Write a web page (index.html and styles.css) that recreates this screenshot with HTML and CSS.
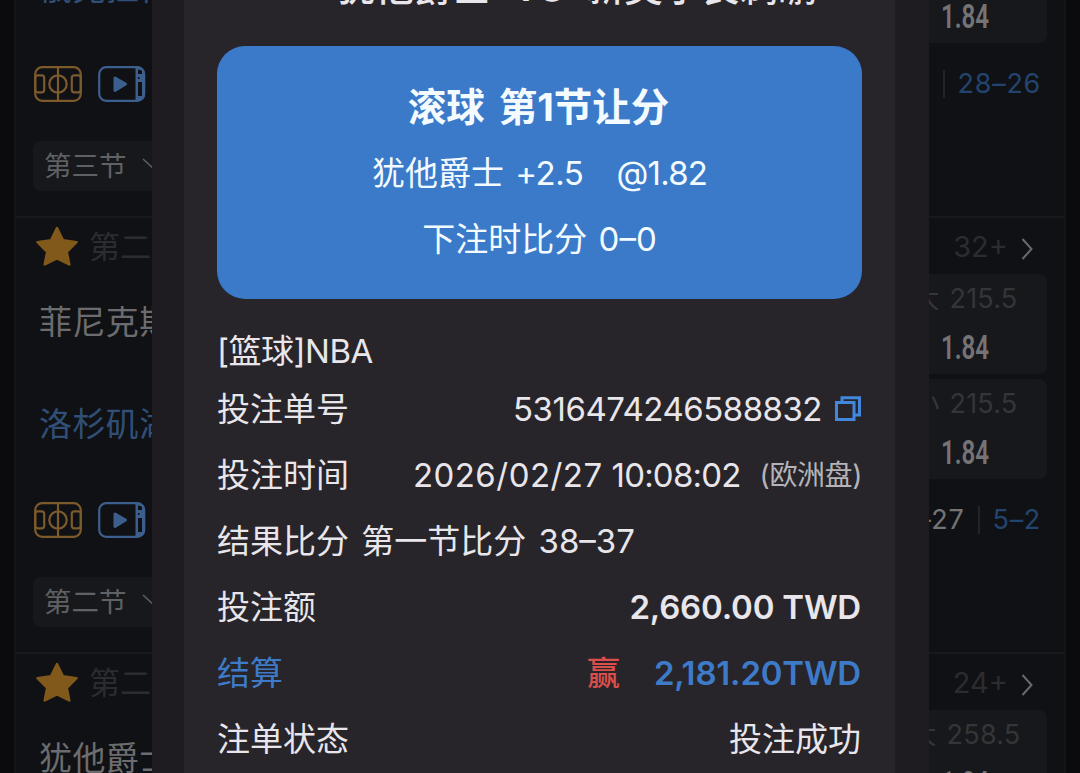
FILE: index.html
```
<!DOCTYPE html>
<html lang="zh-CN">
<head>
    <meta charset="UTF-8">
    <meta name="viewport" content="width=device-width, initial-scale=1.0">
    <title>注单详情</title>
    <link rel="stylesheet" href="styles.css">
</head>
<body>
    <!-- Shared icons -->
    <svg class="sprite" width="0" height="0">
        <symbol id="court" viewBox="0 0 48 36">
            <g fill="none" stroke="currentColor" stroke-width="2.200">
                <rect x="1.200" y="1.200" width="45.600" height="33.600" rx="7"/>
                <path d="M24 1v34"/>
                <rect x="1.200" y="9.300" width="9" height="17" rx="2.500"/>
                <rect x="37.800" y="9.300" width="9" height="17" rx="2.500"/>
                <circle cx="24" cy="18" r="8.700"/>
            </g>
        </symbol>
        <symbol id="video" viewBox="0 0 48 36">
            <rect x="1.200" y="1.200" width="45" height="33.600" rx="7" fill="none" stroke="currentColor" stroke-width="2.200"/>
            <path fill-rule="evenodd" d="M37.500 1h3.500q6 1 6 7v20q0 6-6 7h-3.500zM40 3.500v4.500h4V4.500zM40 16v14h4V16zM40 11v2h1.500v-2z" fill="currentColor"/>
            <path d="M17 12l10.500 6-10.500 6.500z" fill="currentColor" stroke="currentColor" stroke-width="3" stroke-linejoin="round"/>
        </symbol>
        <symbol id="star" viewBox="0 0 44 40">
            <path d="M22 2l6 12.300 13.500 1.900-9.700 9.600L34.300 38.500 22 32.300 9.700 38.500l2.500-12.700L2.500 16.200 16 14.300z" fill="currentColor" stroke="currentColor" stroke-width="2.500" stroke-linejoin="round"/>
        </symbol>
        <symbol id="arrow" viewBox="0 0 12 24">
            <path d="M1.500 2l9 10-9 10" fill="none" stroke="currentColor" stroke-width="2"/>
        </symbol>
        <symbol id="down" viewBox="0 0 24 12">
            <path d="M1 1l11 10L23 1" fill="none" stroke="currentColor" stroke-width="1.500"/>
        </symbol>
    </svg>

    <main class="match-list">
        <section class="match">
            <div class="match-head">
                <svg class="star"><use href="#star"/></svg>
                <span class="period">第三节</span>
                <span class="count">32+</span>
                <svg class="arrow"><use href="#arrow"/></svg>
            </div>
            <div class="match-body">
                <div class="teams">
                    <div class="team">孟菲斯灰熊</div>
                    <div class="team away">俄克拉荷马雷霆</div>
                </div>
                <div class="odds-col">
                    <div class="odds"><span class="line">大 215.5</span><b>1.84</b></div>
                    <div class="odds"><span class="line">小 215.5</span><b>1.84</b></div>
                </div>
            </div>
            <div class="match-foot">
                <svg class="court"><use href="#court"/></svg>
                <svg class="video"><use href="#video"/></svg>
                <div class="scores"><span class="bar"></span><span class="now">28–26</span></div>
            </div>
            <div class="picker">第三节 <svg class="down"><use href="#down"/></svg></div>
        </section>

        <section class="match">
            <div class="match-head">
                <svg class="star"><use href="#star"/></svg>
                <span class="period">第二节</span>
                <span class="count">32+</span>
                <svg class="arrow"><use href="#arrow"/></svg>
            </div>
            <div class="match-body">
                <div class="teams">
                    <div class="team">菲尼克斯太阳</div>
                    <div class="team away">洛杉矶湖人</div>
                </div>
                <div class="odds-col">
                    <div class="odds"><span class="line">大 215.5</span><b>1.84</b></div>
                    <div class="odds"><span class="line">小 215.5</span><b>1.84</b></div>
                </div>
            </div>
            <div class="match-foot">
                <svg class="court"><use href="#court"/></svg>
                <svg class="video"><use href="#video"/></svg>
                <div class="scores"><span>24–27</span><span class="bar"></span><span class="now">5–2</span></div>
            </div>
            <div class="picker">第二节 <svg class="down"><use href="#down"/></svg></div>
        </section>

        <section class="match">
            <div class="match-head">
                <svg class="star"><use href="#star"/></svg>
                <span class="period">第二节</span>
                <span class="count">24+</span>
                <svg class="arrow"><use href="#arrow"/></svg>
            </div>
            <div class="match-body">
                <div class="teams">
                    <div class="team">犹他爵士</div>
                </div>
                <div class="odds-col">
                    <div class="odds"><span class="line">大 258.5</span><b>1.84</b></div>
                </div>
            </div>
        </section>
    </main>

    <!-- Bet detail -->
    <div class="modal">
        <div class="panel">
            <h1 class="title">犹他爵士 <span class="vs">VS</span> 新奥尔良鹈鹕</h1>
            <div class="card">
                <h2>滚球 第1节让分</h2>
                <p>犹他爵士 <span class="hcap">+2.5</span><span class="price">@1.82</span></p>
                <p>下注时比分 <span>0–0</span></p>
            </div>
            <div class="row league">[篮球]NBA</div>
            <div class="row">
                <span>投注单号</span>
                <span class="value"><span class="id">5316474246588832</span>
                    <svg class="copy" viewBox="0 0 26 26" fill="none" stroke="currentColor" stroke-width="3">
                        <path d="M1.500 6.500h17.500v17H1.500zM7 5V1.800h17.500V19H20"/>
                    </svg>
                </span>
            </div>
            <div class="row">
                <span>投注时间</span>
                <span class="value"><span class="date">2026/02/27</span><span class="time">10:08:02</span><small>(欧洲盘)</small></span>
            </div>
            <div class="row result">结果比分 第一节比分 38–37</div>
            <div class="row"><span>投注额</span><span class="money">2,660.00 TWD</span></div>
            <div class="row settle">
                <span>结算</span>
                <span class="value"><span class="win">赢</span><span class="money">2,181.20TWD</span></span>
            </div>
            <div class="row"><span>注单状态</span><span class="status">投注成功</span></div>
        </div>
    </div>
</body>
</html>
```
FILE: styles.css
```
* {
    box-sizing: border-box;
}
body {
    margin: 0;
    height: 773px;
    overflow: hidden;
    position: relative;
    background: #0b0b0d;
    font-family: Inter, "Noto Sans CJK SC", sans-serif;
    color: #e8e6eb;
}
.sprite {
    position: absolute;
}
svg {
    display: block;
    flex: none;
}

/* Match list behind the dialog */
.match-list {
    width: 1052px;
    height: 993px;
    margin: -220px auto 0;
    overflow: hidden;
    background: #101114;
    border-left: 2px solid #141518;
    border-right: 2px solid #141518;
}
.match {
    height: 436px;
    padding: 0 17px;
    border-top: 2px solid #191a1d;
}
.match-head {
    display: flex;
    align-items: center;
    height: 56px;
    padding: 0 14px 0 2px;
    font-size: 31px;
    color: #2b2c30;
}
.star {
    width: 44px;
    height: 40px;
    color: #80591b;
}
.period {
    margin-left: 10px;
    padding-bottom: 4px;
}
.count {
    margin-left: auto;
    font-size: 29px;
}
.arrow {
    width: 12px;
    height: 24px;
    margin: 5px 0 0 13px;
    color: #68696c;
}
.match-body {
    display: flex;
    justify-content: space-between;
    height: 205px;
}
.team {
    padding-left: 6px;
    font-size: 33px;
    letter-spacing: 0.400px;
    line-height: 96px;
    color: #6c6c6e;
}
.away {
    line-height: 109px;
    color: #304f77;
}
.odds-col {
    display: flex;
    flex-direction: column;
    gap: 5px;
    width: 164px;
}
.odds {
    height: 100px;
    border-radius: 8px;
    background: #17181b;
    text-align: center;
}
.line {
    display: block;
    font-size: 27px;
    letter-spacing: 0.200px;
    word-spacing: 2px;
    line-height: 49px;
    color: #343538;
}
.odds b {
    display: block;
    font-family: Roboto, sans-serif;
    font-size: 34px;
    font-weight: 600;
    line-height: 49px;
    color: #747476;
    transform: scaleX(0.71);
}
.match-foot {
    display: flex;
    align-items: center;
    height: 82px;
}
.court {
    width: 48px;
    height: 36px;
    margin-left: 1px;
    color: #7b5a2c;
}
.video {
    width: 48px;
    height: 36px;
    margin-left: 16px;
    color: #3c5f8e;
}
.scores {
    display: flex;
    align-items: center;
    margin-left: auto;
    padding: 0 6px 1px 0;
    font-size: 27px;
    letter-spacing: 0.700px;
    color: #747476;
}
.bar {
    width: 2px;
    height: 28px;
    margin: 0 13px;
    background: #232427;
}
.now {
    color: #23446f;
}
.picker {
    display: flex;
    align-items: center;
    width: 160px;
    height: 50px;
    margin-top: 16px;
    padding: 0 0 4px 11px;
    border-radius: 8px;
    background: #17181b;
    font-size: 27.500px;
    color: #606164;
}
.down {
    width: 24px;
    height: 12px;
    margin-left: 15px;
}

/* Dialog */
.modal {
    position: absolute;
    top: 0;
    left: 152px;
    width: 777px;
    height: 773px;
    padding: 0 34px 0 32px;
    background: #1e1c21;
}
.panel {
    display: flow-root;
    height: 773px;
    padding: 0 33px;
    background: #27242a;
    font-size: 33px;
}
.title {
    margin: -41px 0 30px;
    padding-left: 120px;
    font-size: 38.500px;
    font-weight: 500;
    line-height: 57px;
    white-space: nowrap;
}
.vs {
    margin: 0 11px;
}
.card {
    height: 253px;
    padding-top: 28px;
    border-radius: 28px;
    background: #3a7ac9;
    color: #f4fbff;
    text-align: center;
}
.card h2 {
    margin: 0;
    padding-right: 2px;
    font-size: 38.500px;
    font-weight: 700;
    line-height: 66px;
    word-spacing: 5px;
}
.card p {
    margin: 0;
    line-height: 66px;
    word-spacing: 2px;
}
.hcap {
    letter-spacing: -0.400px;
}
.price {
    margin-left: 33px;
    letter-spacing: -0.800px;
}
.row {
    display: flex;
    justify-content: space-between;
    line-height: 66px;
    white-space: nowrap;
}
.league {
    margin-top: 27px;
    line-height: 50px;
    letter-spacing: -0.500px;
}
.result {
    word-spacing: 3px;
}
.value {
    display: flex;
    align-items: center;
}
.id {
    letter-spacing: -0.500px;
}
.copy {
    width: 26px;
    height: 26px;
    margin: 0 1px 0 13px;
    color: #4387dd;
}
.date {
    letter-spacing: 0.450px;
}
.time {
    margin-left: 9px;
    letter-spacing: -0.800px;
}
.row small {
    margin-left: 19px;
    font-size: 28px;
    letter-spacing: -0.400px;
    color: #b5b3b8;
}
.money {
    margin-right: 1px;
    font-weight: 600;
    letter-spacing: -0.200px;
}
.settle {
    color: #3d7bc8;
}
.win {
    margin-right: 34px;
    font-weight: 500;
    color: #d94f4c;
}
.status {
    margin-right: 1px;
}
```
